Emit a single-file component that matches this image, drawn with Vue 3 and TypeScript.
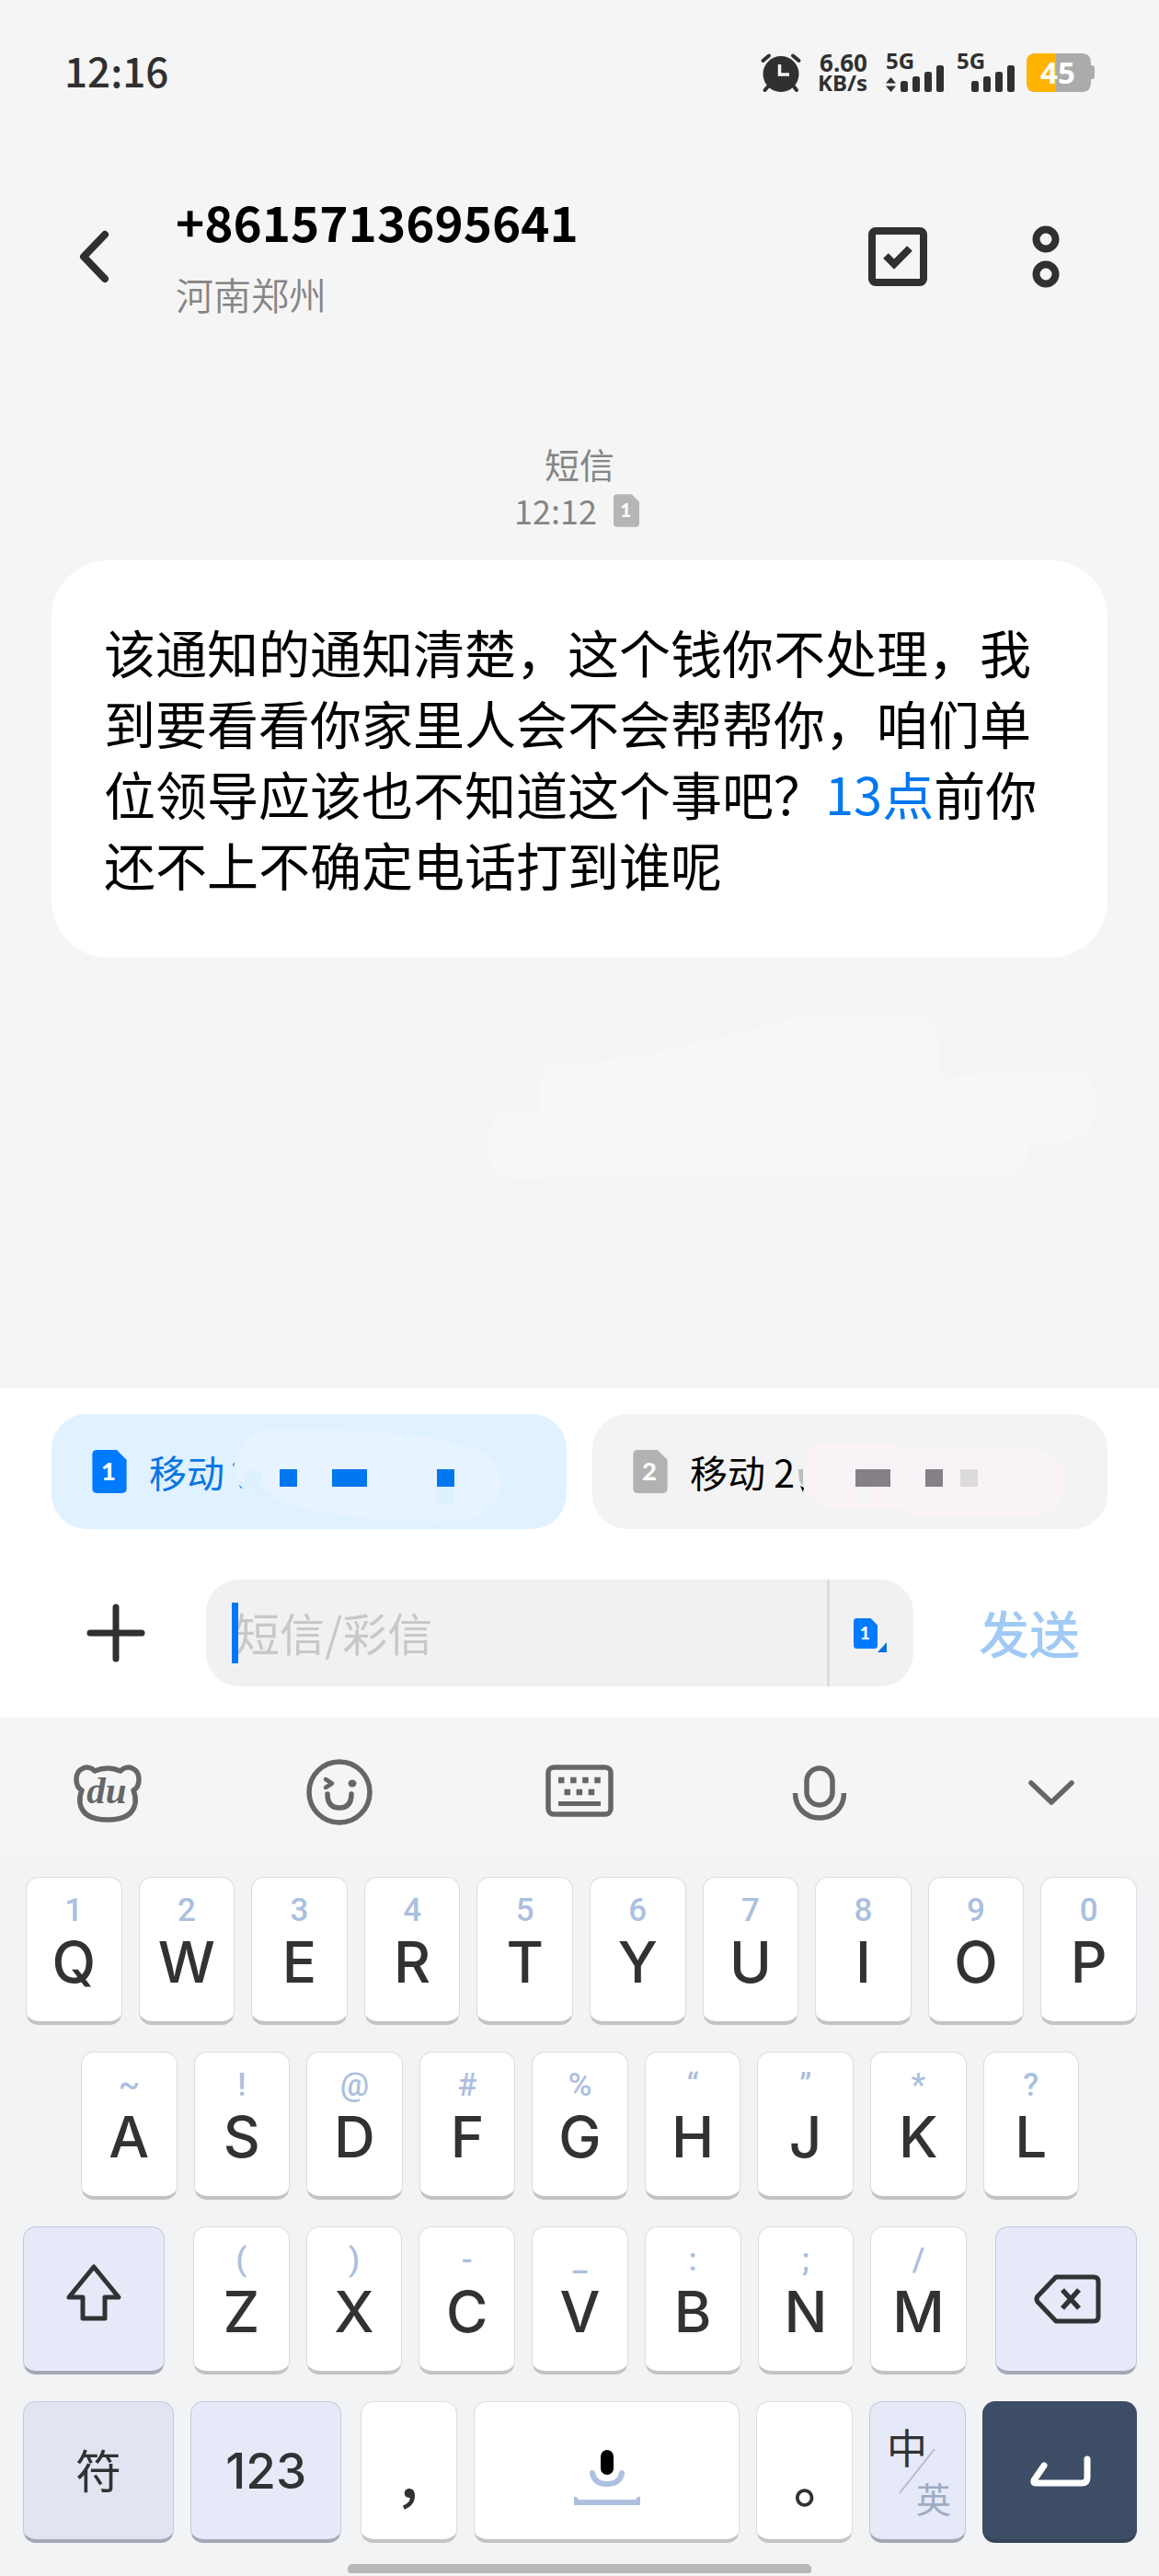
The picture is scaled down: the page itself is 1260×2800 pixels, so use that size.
<script setup lang="ts">
import { h, ref, type FunctionalComponent } from 'vue'

interface LetterKey {
  main: string
  alt: string
}

const SimCard: FunctionalComponent<{ slot_no: string; fill: string; w: number; ht: number }> = (props) =>
  h('svg', { width: props.w, height: props.ht, viewBox: '0 0 38 48', 'aria-hidden': 'true' }, [
    h('path', { d: 'M5 0H27L38 11V43Q38 48 33 48H5Q0 48 0 43V5Q0 0 5 0Z', fill: props.fill }),
    h(
      'text',
      {
        x: 18,
        y: 34,
        'text-anchor': 'middle',
        'font-family': 'Lato, sans-serif',
        'font-weight': 900,
        'font-size': 28,
        fill: '#fff',
      },
      props.slot_no,
    ),
  ])
SimCard.props = ['slot_no', 'fill', 'w', 'ht']

function toKeys(letters: string, alts: string): LetterKey[] {
  const marks = Array.from(alts)
  return Array.from(letters).map((main, i) => ({ main, alt: marks[i] }))
}

const topRow = toKeys('QWERTYUIOP', '1234567890')
const homeRow = toKeys('ASDFGHJKL', '~!@#%“”*?')
const bottomRow = toKeys('ZXCVBNM', '()-_:;/')

const draft = ref('')
</script>

<template>
  <div class="screen">
    <div class="status">
      <span class="clock">12:16</span>
      <div class="indicators">
        <svg class="alarm" width="44" height="42" viewBox="0 0 44 42" fill="#303030" stroke="#303030">
          <circle cx="22" cy="22.500" r="19.500" stroke="none" />
          <path d="M2.500 8L9 2.500M35 2.500L41.500 8M8 36L4.500 40M36 36L39 40" stroke-width="4" stroke-linecap="round" fill="none" />
          <path d="M20.500 12V23H31" stroke="#f5f5f5" stroke-width="3.500" fill="none" />
        </svg>
        <div class="speed"><span class="rate">6.60</span><span>KB/s</span></div>
        <svg class="signal" width="64" height="42" viewBox="0 0 64 42" fill="#303030">
          <text x="0" y="17" class="net">5G</text>
          <path d="M0 32.500L5.500 26L11 32.500ZM0 35.500L5.500 42L11 35.500Z" />
          <rect x="16" y="30" width="8" height="12" rx="2.500" />
          <rect x="29" y="25" width="8" height="17" rx="2.500" />
          <rect x="42" y="20" width="8" height="22" rx="2.500" />
          <rect x="55" y="13" width="8" height="29" rx="2.500" />
        </svg>
        <svg class="signal second" width="64" height="42" viewBox="0 0 64 42" fill="#303030">
          <text x="0" y="17" class="net">5G</text>
          <rect x="16" y="30" width="8" height="12" rx="2.500" />
          <rect x="29" y="25" width="8" height="17" rx="2.500" />
          <rect x="42" y="20" width="8" height="22" rx="2.500" />
          <rect x="55" y="13" width="8" height="29" rx="2.500" />
        </svg>
        <svg class="battery" width="74" height="42" viewBox="0 0 74 42">
          <path d="M10 0H60Q70 0 70 10V13H71Q74 13 74 16V25Q74 28 71 28H70V32Q70 42 60 42H10Q0 42 0 32V10Q0 0 10 0Z" fill="#ababab" />
          <path d="M10 0H32V42H10Q0 42 0 32V10Q0 0 10 0Z" fill="#ffb400" />
          <text x="34" y="33" text-anchor="middle" class="level">45</text>
        </svg>
      </div>
    </div>

    <header class="header">
      <button class="plain back" aria-label="返回">
        <svg width="34" height="58" viewBox="0 0 34 58" fill="none" stroke="#303030" stroke-width="8">
          <path d="M28 5L5 29L28 53" stroke-linecap="round" stroke-linejoin="round" />
        </svg>
      </button>
      <div class="contact">
        <h1>+8615713695641</h1>
        <p>河南郑州</p>
      </div>
      <button class="plain" aria-label="选择">
        <svg width="64" height="64" viewBox="0 0 64 64" fill="none" stroke="#303030" stroke-width="8">
          <rect x="4" y="4" width="56" height="56" rx="4" />
          <path d="M19 31L28 40L45 23" />
        </svg>
      </button>
      <button class="plain more" aria-label="更多">
        <svg width="30" height="68" viewBox="0 0 30 68" fill="none" stroke="#303030" stroke-width="8">
          <circle cx="15" cy="15" r="10.500" />
          <circle cx="15" cy="53" r="10.500" />
        </svg>
      </button>
    </header>

    <main class="thread">
      <div class="stamp">
        <span>短信</span>
        <span class="when"><time>12:12</time><SimCard slot_no="1" fill="#b5b5b5" :w="28" :ht="36" /></span>
      </div>
      <p class="bubble">该通知的通知清楚，这个钱你不处理，我到要看看你家里人会不会帮帮你，咱们单位领导应该也不知道这个事吧？<a href="#">13点</a>前你还不上不确定电话打到谁呢</p>
      <svg class="smear" width="662" height="184" viewBox="530 1100 662 184" fill="#f7f7f7">
        <path d="M607 1155Q660 1155 708 1145Q780 1130 859 1108Q920 1103 985 1103Q1018 1106 1021 1130V1173Q1090 1163 1164 1163Q1191 1168 1191 1200Q1190 1236 1160 1240L1118 1242Q1118 1277 1089 1277H800L558 1282Q531 1276 531 1245Q531 1209 558 1208H587V1180Q590 1156 607 1155Z" />
      </svg>
    </main>

    <section class="composer">
      <div class="sims">
        <button class="sim active">
          <SimCard slot_no="1" fill="#007aff" :w="38" :ht="47" />
          <span>移动</span>
          <svg class="mask" width="310" height="125" viewBox="244 1536 310 125">
            <path d="M257 1600Q258 1558 290 1553Q400 1550 480 1564Q545 1575 545 1610Q542 1650 490 1653Q400 1656 310 1634Q290 1622 283 1612Q257 1612 257 1600Z" fill="#e7f3fe" />
            <path d="M253 1590L255 1589L254 1594ZM260 1613L264 1617L261 1616Z" fill="#1179dc" />
            <path d="M266 1597H284V1632H276V1615H266ZM475 1615H494V1634H475Z" fill="#dff1ff" />
            <path d="M304 1596H323V1615H304ZM361 1596H399V1615H361ZM475 1596H494V1615H475Z" fill="#0077ee" />
          </svg>
        </button>
        <button class="sim">
          <SimCard slot_no="2" fill="#b2b2b2" :w="38" :ht="47" />
          <span>移动 2</span>
          <svg class="mask" width="296" height="125" viewBox="865 1536 296 125">
            <path d="M869 1596H874V1614L870 1609Z" fill="#bdbdbd" />
            <path d="M871 1614L875 1616L874 1621Z" fill="#000" />
            <path d="M880 1575Q884 1568 895 1568H970L980 1574H1125Q1153 1578 1158 1602Q1158 1640 1130 1648H992L985 1639H900L880 1625Q872 1600 880 1575Z" fill="#f9f3f7" />
            <path d="M931 1615H950V1634H931Z" fill="#f4f4f4" />
            <path d="M931 1596H969V1615H931ZM1007 1596H1026V1615H1007Z" fill="#858085" />
            <path d="M1045 1596H1064V1615H1045Z" fill="#dcdadd" />
          </svg>
        </button>
      </div>
      <div class="entry">
        <button class="plain add" aria-label="添加">
          <svg width="64" height="64" viewBox="0 0 64 64" stroke="#303030" stroke-width="7" stroke-linecap="round">
            <path d="M32 4V60M4 32H60" />
          </svg>
        </button>
        <div class="field">
          <label class="type"><input v-model="draft" type="text" placeholder="短信/彩信" aria-label="短信/彩信" /></label>
          <button class="plain pick" aria-label="选择发送卡">
            <SimCard slot_no="1" fill="#007aff" :w="26" :ht="33" />
            <svg class="corner" width="10" height="11" viewBox="0 0 10 11"><path d="M10 0V11H0Z" fill="#0b72dd" /></svg>
          </button>
        </div>
        <button class="plain send">发送</button>
      </div>
    </section>

    <section class="keyboard">
      <div class="tools">
        <button class="plain" aria-label="输入法">
          <svg width="74" height="74" viewBox="0 0 74 74" fill="none" stroke="#666" stroke-width="5.500">
            <path d="M23 14Q37 8 51 14C58 6 71 11 71 23C71 30 69 33 65 35Q68 42 67 49C65 61 55 67 37 67C19 67 9 61 7 49Q6 42 9 35C5 33 3 30 3 23C3 11 16 6 23 14Z" stroke-linejoin="round" />
            <text x="36" y="49" text-anchor="middle" class="du">du</text>
          </svg>
        </button>
        <button class="plain" aria-label="表情">
          <svg width="74" height="74" viewBox="0 0 74 74" fill="none" stroke="#666" stroke-width="5.500">
            <circle cx="37" cy="37" r="33" />
            <path d="M22 23L29 27.500L22 32" stroke-width="4.500" stroke-linecap="round" stroke-linejoin="round" />
            <ellipse cx="51" cy="27.500" rx="4.500" ry="4" fill="#666" stroke="none" />
            <path d="M24 39Q24 54 37 54Q50 54 50 39" stroke-linecap="round" />
          </svg>
        </button>
        <button class="plain" aria-label="键盘">
          <svg width="74" height="74" viewBox="0 0 74 74" fill="none" stroke="#666" stroke-width="5.500">
            <rect x="3" y="10" width="68" height="51" rx="6" />
            <path d="M14 24H62" stroke-width="6.500" stroke-dasharray="6.500 6.600" />
            <path d="M20.500 37H56" stroke-width="6.500" stroke-dasharray="6.500 6.600" />
            <path d="M14 49.500H60" stroke-width="5" />
          </svg>
        </button>
        <button class="plain" aria-label="语音">
          <svg width="74" height="74" viewBox="0 0 74 74" fill="none" stroke="#666" stroke-width="5.500">
            <rect x="23" y="11" width="28" height="40" rx="14" />
            <path d="M10.500 38C10.500 54 22 65 37 65S63.500 54 63.500 38" />
          </svg>
        </button>
        <button class="plain" aria-label="收起">
          <svg width="74" height="74" viewBox="0 0 74 74" fill="none" stroke="#666" stroke-width="5.500">
            <path d="M15 27L37 48L59 27" stroke-linecap="round" stroke-linejoin="round" />
          </svg>
        </button>
      </div>

      <div class="rows">
        <div class="row first">
          <button v-for="k in topRow" :key="k.main" class="key"><small>{{ k.alt }}</small><b>{{ k.main }}</b></button>
        </div>
        <div class="row second-row">
          <button v-for="k in homeRow" :key="k.main" class="key"><small>{{ k.alt }}</small><b>{{ k.main }}</b></button>
        </div>
        <div class="row">
          <button class="key tint shift" aria-label="大写">
            <svg width="60" height="70" viewBox="0 0 60 70" fill="none" stroke="#303233" stroke-width="5" stroke-linejoin="round">
              <path d="M30 4L57 37H42V60H18V37H3Z" />
            </svg>
          </button>
          <button v-for="k in bottomRow" :key="k.main" class="key"><small>{{ k.alt }}</small><b>{{ k.main }}</b></button>
          <button class="key tint erase" aria-label="删除">
            <svg width="76" height="56" viewBox="-4 0 76 56" fill="none" stroke="#303233" stroke-width="5" stroke-linejoin="round">
              <path d="M23 4H64Q69 4 69 9V47Q69 52 64 52H23L3 31Q1 28 3 25Z" />
              <path d="M30 18L48 38M48 18L30 38" stroke-width="5.500" />
            </svg>
          </button>
        </div>
        <div class="row last">
          <button class="key tint symbol">符</button>
          <button class="key tint number">123</button>
          <button class="key mark">，</button>
          <button class="key space" aria-label="空格">
            <svg width="74" height="64" viewBox="0 0 74 64" fill="none">
              <rect x="30" y="0" width="14" height="27" rx="7" fill="#000" />
              <path d="M21 25Q23 37 37 37Q51 37 53 25" stroke="#adc0e0" stroke-width="6" stroke-linecap="round" />
              <path d="M1 51Q4 50 6 54H68Q70 50 73 51V60H1Z" fill="#adc0e0" />
            </svg>
          </button>
          <button class="key mark">。</button>
          <button class="key tint lang">
            <span>中</span>
            <svg width="40" height="50" viewBox="0 0 40 50"><path d="M39 1L1 49" stroke="#b4bdcb" stroke-width="2" /></svg>
            <span class="off">英</span>
          </button>
          <button class="key enter" aria-label="换行">
            <svg width="68" height="34" viewBox="0 0 68 34" fill="none" stroke="#fff" stroke-width="7" stroke-linecap="round" stroke-linejoin="round">
              <path d="M17 11L6 27Q5 30 8 30H58Q64 30 64 24V4" />
            </svg>
          </button>
        </div>
      </div>
      <div class="pill"></div>
    </section>
  </div>
</template>

<style>
body {
  background: #f5f5f5;
}
</style>

<style scoped>
.screen {
  min-height: 100vh;
  display: flex;
  flex-direction: column;
  background: #f5f5f5;
  color: #303030;
  font-family: "Noto Sans CJK SC", sans-serif;
}

svg {
  display: block;
  flex: none;
  overflow: visible;
}

button {
  margin: 0;
  padding: 0;
  border: 0;
  font: inherit;
  color: inherit;
}

.plain {
  display: block;
  background: none;
}

.status {
  display: flex;
  justify-content: space-between;
  align-items: center;
  padding: 57px 70px 0 70px;
}

.clock {
  font-size: 44px;
  line-height: 36px;
  padding-bottom: 6px;
  font-weight: 500;
}

.indicators {
  display: flex;
  align-items: center;
}

.speed {
  display: flex;
  flex-direction: column;
  align-items: flex-end;
  margin: 0 20px 0 18px;
  font: 700 24px/22px "Noto Sans", sans-serif;
}

.rate {
  font-size: 26px;
}

.net {
  font: 700 24px "Noto Sans", sans-serif;
}

.second {
  margin: 0 12px 0 13px;
}

.level {
  font: 700 33px "Noto Sans", sans-serif;
  fill: #fff;
}

.header {
  display: flex;
  align-items: center;
  padding: 99px 108px 0 86px;
}

.contact {
  flex: 1;
  margin-left: 71px;
}

.contact h1 {
  margin: 0;
  font-size: 53px;
  line-height: 80px;
  font-weight: 700;
  color: #000;
}

.contact p {
  margin: 0;
  font-size: 41px;
  line-height: 78px;
  color: #858585;
  font-weight: 350;
}

.more {
  margin-left: 114px;
}

.thread {
  flex: 1;
  display: flex;
  flex-direction: column;
  padding: 120px 56px 60px;
}

.stamp {
  display: flex;
  flex-direction: column;
  align-items: center;
  font-size: 38px;
  line-height: 51px;
  color: #858585;
}

.when {
  display: flex;
  align-items: center;
  gap: 18px;
  padding-right: 6px;
  font-size: 36px;
}

.bubble {
  margin: 29px 0 0;
  padding: 60px 57px 64px;
  border-radius: 62px;
  background: #fff;
  color: #000;
  font-size: 56px;
  line-height: 77px;
}

.bubble a {
  color: #0078f0;
  text-decoration: none;
}

.smear {
  align-self: flex-end;
  margin: 59px 12px 0 0;
}

.composer {
  background: #fff;
  padding: 28px 56px 34px;
}

.sims {
  display: flex;
  gap: 28px;
}

.sim {
  flex: 1;
  min-width: 0;
  display: flex;
  align-items: center;
  overflow: hidden;
  padding-left: 44px;
  border-radius: 38px;
  background: #f3f3f3;
  color: #000;
  font-size: 41px;
  line-height: 56px;
}

.sim span {
  margin-left: 24px;
  padding-bottom: 2px;
}

.active {
  background: #e0f1ff;
  color: #0876e4;
}

.entry {
  display: flex;
  align-items: center;
  margin-top: 55px;
}

.add {
  margin: 0 66px 0 38px;
}

.field {
  flex: 1;
  min-width: 0;
  display: flex;
  height: 116px;
  border-radius: 36px;
  background: #f1f1f1;
}

.type {
  position: relative;
  flex: 1;
  min-width: 0;
  display: flex;
}

.type::before {
  content: "";
  position: absolute;
  left: 28px;
  top: 25px;
  width: 7px;
  height: 66px;
  background: #0078f5;
}

.type input {
  flex: 1;
  min-width: 0;
  padding: 0 0 4px 31px;
  border: 0;
  outline: 0;
  background: none;
  font: 400 49px "Noto Sans CJK SC", sans-serif;
  color: #000;
}

.type input::placeholder {
  color: #c8c8c8;
  opacity: 1;
}

.pick {
  display: flex;
  align-items: center;
  padding: 0 29px 0 26px;
  border-left: 3px solid #dcdcdc;
}

.corner {
  align-self: flex-end;
  margin-bottom: 37px;
}

.send {
  margin: 0 30px 0 71px;
  padding-bottom: 4px;
  font-size: 55px;
  line-height: 80px;
  font-weight: 500;
  color: #a0caf5;
}

.keyboard {
  background: #f2f3f5;
}

.tools {
  display: flex;
  justify-content: space-between;
  padding: 44px 80px 31px;
  background: #f5f5f5;
}

.tools .plain:first-child {
  margin-right: -9px;
}

.tools .plain:last-child {
  margin-left: -9px;
}

.du {
  font: italic 700 41px "Liberation Serif", serif;
  fill: #666;
  stroke: none;
}

.rows {
  display: flex;
  flex-direction: column;
  gap: 29px;
  padding: 24px 24px 0 25px;
}

.row {
  display: flex;
  gap: 18px;
}

.first {
  padding-left: 3px;
}

.second-row {
  padding: 0 63px;
}

.key {
  flex: 104 1 0;
  min-width: 0;
  height: 161px;
  box-sizing: border-box;
  display: flex;
  flex-direction: column;
  align-items: center;
  border: 1px solid #dcdde0;
  border-bottom: 4px solid #c2c3c5;
  border-radius: 14px;
  background: #fff;
  color: #303233;
}

.key small {
  margin-top: 16px;
  font: 500 35px/40px Roboto, sans-serif;
  color: #abbfdf;
}

.key b {
  font: 500 62px/72px Inter, sans-serif;
}

.tint {
  justify-content: center;
  border-color: #c5cadb;
  border-bottom-color: #a5a8b7;
  background: #e6e9f8;
}

.shift {
  flex-grow: 154;
  margin-right: 13px;
  padding-bottom: 8px;
}

.erase {
  flex-grow: 154;
  margin-left: 13px;
}

.last .key {
  height: 154px;
}

.last .symbol {
  flex-grow: 164;
  padding-bottom: 6px;
  background: #e1e5f2;
  font-size: 50px;
}

.last .number {
  flex-grow: 164;
  margin-right: 3px;
  font: 500 53px Inter, sans-serif;
}

.mark {
  justify-content: flex-end;
  font: 500 62px/96px "Noto Sans CJK TC", sans-serif;
}

.space {
  flex-grow: 290;
  justify-content: flex-end;
  padding-bottom: 33px;
}

.lang {
  position: relative;
  font-size: 44px;
  line-height: 50px;
}

.lang span {
  position: absolute;
  left: 18px;
  top: 23px;
}

.lang .off {
  left: auto;
  right: 15px;
  top: 79px;
  font-size: 38px;
  color: #9dabc4;
}

.enter {
  flex-grow: 168;
  justify-content: center;
  border-color: #3e4d66;
  border-bottom-color: #354258;
  background: #3e4d66;
}

.pill {
  width: 40%;
  height: 10px;
  margin: 23px auto 0;
  border-radius: 5px;
  background: #b8b8ba;
  border-bottom: 3px solid #f2f3f5;
}
</style>
